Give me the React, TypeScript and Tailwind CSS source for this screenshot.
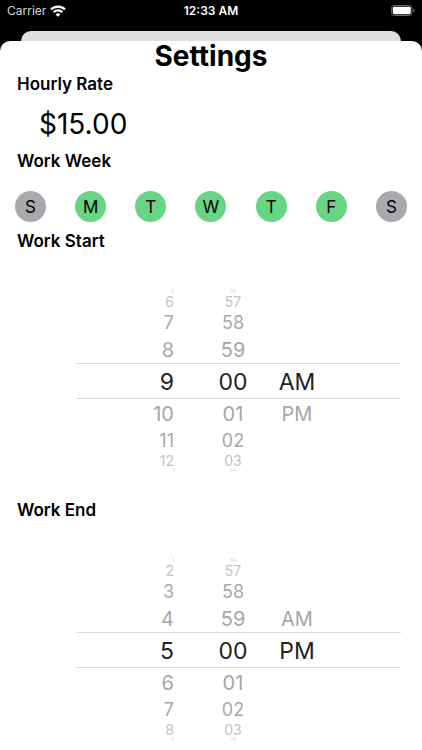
import React, { useState } from 'react';
import clsx from 'clsx';

const days = [
    { name: 'Sunday', letter: 'S' },
    { name: 'Monday', letter: 'M' },
    { name: 'Tuesday', letter: 'T' },
    { name: 'Wednesday', letter: 'W' },
    { name: 'Thursday', letter: 'T' },
    { name: 'Friday', letter: 'F' },
    { name: 'Saturday', letter: 'S' },
];

const hours = Array.from({ length: 12 }, (_, i) => String(i + 1));
const minutes = Array.from({ length: 60 }, (_, i) => String(i).padStart(2, '0'));
const periods = ['AM', 'PM'];

const offsets = [-4, -3, -2, -1, 0, 1, 2, 3, 4];

// Rows get shorter and paler the further they are from the selected one
const rowStyles = [
    'h-9 pt-0.5 text-[23px] text-[#222222]',
    'h-7 pt-0.5 text-[20px] text-[#a6a6a6]',
    'h-[26px] pt-0.5 text-[18px] text-[#a8a8a8]',
    'h-[15px] text-[14px] text-[#c4c4c4]',
    'h-[5px] text-[5px] text-[#d8d8d8]',
];

type WheelProps = {
    label: string;
    values: string[];
    selected: number;
    onSelect: (index: number) => void;
    loop?: boolean;
    className?: string;
};

const Wheel: React.FC<WheelProps> = ({ label, values, selected, onSelect, loop = true, className }) => (
    <div role="listbox" aria-label={label} className={clsx('flex flex-col', className)}>
        {offsets.map((offset) => {
            const position = selected + offset;
            const index = loop ? (position + values.length) % values.length : position;
            const style = rowStyles[Math.abs(offset)];

            if (index < 0 || index >= values.length) {
                return <div key={offset} className={style} />;
            }

            return (
                <button
                    key={offset}
                    type="button"
                    role="option"
                    aria-selected={offset === 0}
                    onClick={() => onSelect(index)}
                    className={clsx('leading-none', style)}
                >
                    {values[index]}
                </button>
            );
        })}
    </div>
);

type TimePickerProps = {
    title: string;
    defaultHour: number;
    defaultPeriod: number;
};

const TimePicker: React.FC<TimePickerProps> = ({ title, defaultHour, defaultPeriod }) => {
    const [hour, setHour] = useState(defaultHour - 1);
    const [minute, setMinute] = useState(0);
    const [period, setPeriod] = useState(defaultPeriod);

    return (
        <section>
            <h2 className="px-[17px] text-[17px] font-semibold leading-6">{title}</h2>
            <div className="relative ml-[76px] mr-[21px] mt-9 flex">
                <Wheel
                    label={`${title} hour`}
                    values={hours}
                    selected={hour}
                    onSelect={setHour}
                    className="w-[98px] items-end"
                />
                <Wheel
                    label={`${title} minute`}
                    values={minutes}
                    selected={minute}
                    onSelect={setMinute}
                    className="ml-[27px] w-16 items-center"
                />
                <Wheel
                    label={`${title} period`}
                    values={periods}
                    selected={period}
                    onSelect={setPeriod}
                    loop={false}
                    className="w-16 items-center"
                />
                <div className="pointer-events-none absolute inset-x-0 top-1/2 h-9 -translate-y-1/2 border-y border-[#dcdcdc]" />
            </div>
        </section>
    );
};

const StatusBar: React.FC = () => (
    <header className="grid h-[31px] grid-cols-3 items-start px-[7px] pt-[3px] text-xs leading-4 text-white">
        <div className="flex items-center gap-1">
            <span className="text-[#d8d8d8]">Carrier</span>
            <svg width="16" height="12" viewBox="0 0 16 12" fill="none" stroke="white" strokeWidth="2.2" aria-hidden="true">
                <path d="M1 4.4a10 10 0 0 1 14 0" />
                <path d="M3.6 7.2a6.3 6.3 0 0 1 8.8 0" />
                <path d="M8 11.8 5.6 9.4a3.4 3.4 0 0 1 4.8 0z" fill="white" stroke="none" />
            </svg>
        </div>
        <span className="text-center font-semibold">12:33 AM</span>
        <svg className="mt-0.5 justify-self-end" width="24" height="11" viewBox="0 0 24 11" aria-hidden="true">
            <rect x="0.5" y="0.5" width="20.5" height="10" rx="2.8" fill="none" stroke="#666666" />
            <rect x="1.8" y="1.8" width="18" height="7.4" rx="1.4" fill="white" />
            <path d="M22.2 3.8c1 .4 1.4 1 1.4 1.7s-.4 1.3-1.4 1.7z" fill="#666666" />
        </svg>
    </header>
);

const App: React.FC = () => {
    const [rate, setRate] = useState('$15.00');
    const [workDays, setWorkDays] = useState([false, true, true, true, true, true, false]);

    const toggleDay = (index: number) => {
        setWorkDays(workDays.map((on, i) => (i === index ? !on : on)));
    };

    return (
        <div className="flex min-h-screen flex-col bg-black font-['Inter',sans-serif] text-black">
            <StatusBar />
            <div className="mx-[21px] h-2.5 rounded-t-[10px] bg-[#e0e0e0]" />
            <main className="flex-1 rounded-t-[10px] bg-white">
                <h1 className="text-center text-[28px] font-bold leading-[31px]">Settings</h1>

                <label htmlFor="rate" className="block px-[17px] text-[17px] font-semibold leading-6">
                    Hourly Rate
                </label>
                <input
                    id="rate"
                    type="text"
                    inputMode="decimal"
                    value={rate}
                    onChange={(e) => setRate(e.target.value)}
                    className="block h-[53px] w-full px-[39px] pt-0.5 text-[28px] outline-none"
                />

                <h2 className="px-[17px] text-[17px] font-semibold leading-6">Work Week</h2>
                <div className="flex justify-between px-[15px] pb-[7px] pt-[18px]">
                    {days.map((day, i) => (
                        <button
                            key={day.name}
                            type="button"
                            aria-label={day.name}
                            aria-pressed={workDays[i]}
                            onClick={() => toggleDay(i)}
                            className={clsx(
                                'size-[31px] rounded-full pt-0.5 text-[17px]',
                                workDays[i] ? 'bg-[#67d583]' : 'bg-[#a8a8ad]'
                            )}
                        >
                            {day.letter}
                        </button>
                    ))}
                </div>

                <TimePicker title="Work Start" defaultHour={9} defaultPeriod={0} />
                <div className="mt-[25px]">
                    <TimePicker title="Work End" defaultHour={5} defaultPeriod={1} />
                </div>
            </main>
        </div>
    );
};

export default App;
